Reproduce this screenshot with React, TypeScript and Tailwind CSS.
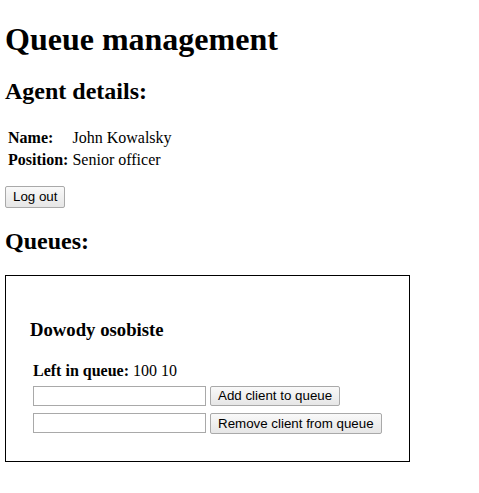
import React from 'react';

const btn =
  "font-['Liberation_Sans',Arial,sans-serif] text-[13.33px] leading-[16px] text-black px-[7px] border border-[#a9a9a9] rounded-[2px] bg-gradient-to-b from-[#f9f9f9] to-[#e6e6e6]";

const QueueCard: React.FC<{ name: string; left: string }> = ({ name, left }) => (
  <div className="border border-black px-[24px] pt-[24px] pb-[27px]">
    <h3 className="mt-[19px] text-[18.72px] leading-[21px] font-bold">{name}</h3>
    <div className="mt-[19px] pl-[3px]">
      <p className="text-[16px] leading-[18px] pt-[3px]">
        <b>Left in queue:</b> {left}
      </p>
      <div className="mt-[6px] flex items-start gap-[4px]">
        <input className="w-[173px] h-[20px] border border-[#a9a9a9] bg-white" />
        <button className={`${btn} h-[20px]`}>Add client to queue</button>
      </div>
      <div className="mt-[7px] flex items-start gap-[4px]">
        <input className="w-[173px] h-[20px] border border-[#a9a9a9] bg-white" />
        <button className={`${btn} h-[21px]`}>Remove client from queue</button>
      </div>
    </div>
  </div>
);

export default function App() {
  return (
    <div className="min-h-screen bg-white text-black font-['Liberation_Serif','Times_New_Roman',serif] px-[5px] pt-[21px] pb-[20px]">
      <h1 className="text-[32px] leading-[36px] font-bold">Queue management</h1>
      <h2 className="mt-[21px] text-[24px] leading-[27px] font-bold">Agent details:</h2>
      <table className="mt-[21px] border-separate border-spacing-[2px] text-[16px] leading-[18px]">
        <tbody>
          <tr>
            <td className="p-px font-bold">Name:</td>
            <td className="p-px">John Kowalsky</td>
          </tr>
          <tr>
            <td className="p-px font-bold">Position:</td>
            <td className="p-px">Senior officer</td>
          </tr>
        </tbody>
      </table>
      <div className="mt-[14px] flex">
        <button className={`${btn} h-[22px]`}>Log out</button>
      </div>
      <h2 className="mt-[20px] text-[24px] leading-[27px] font-bold">Queues:</h2>
      <div className="mt-[20px] w-[405px]">
        <QueueCard name="Dowody osobiste" left="100 10" />
      </div>
    </div>
  );
}
